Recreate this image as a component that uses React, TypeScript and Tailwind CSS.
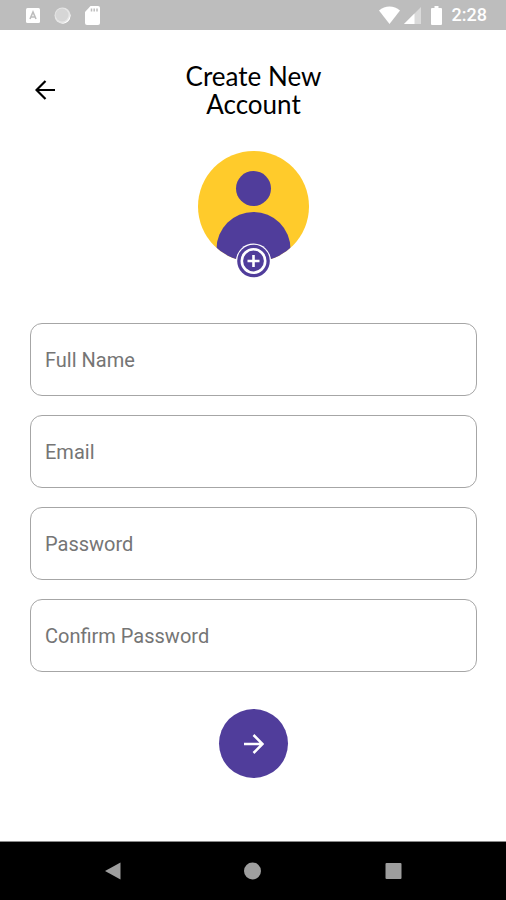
import { useState } from 'react';

interface Field {
  key: string;
  label: string;
  type: string;
}

const FIELDS: Field[] = [
  { key: 'fullName', label: 'Full Name', type: 'text' },
  { key: 'email', label: 'Email', type: 'email' },
  { key: 'password', label: 'Password', type: 'password' },
  { key: 'confirmPassword', label: 'Confirm Password', type: 'password' },
];

function StatusBar() {
  return (
    <div className="flex h-[30px] items-center justify-between bg-[#bdbdbd] pr-[19px] pl-[26px] text-white">
      <div className="flex items-center gap-3.5">
        <svg className="h-[15px] w-[14px]" viewBox="0 0 14 15">
          <rect width="14" height="15" rx="1.5" fill="#fff" />
          <path d="M4 11 7 4l3 7M5 9h4" fill="none" stroke="#bdbdbd" strokeWidth="1.6" />
        </svg>
        <svg className="h-[17px] w-[17px]" viewBox="0 0 17 17">
          <circle cx="8.5" cy="8.5" r="8" fill="#e6e6e6" />
          <path d="M16 6a8 8 0 0 1-10 10.2A9 9 0 0 0 16 6z" fill="#fff" />
          <circle cx="8" cy="8" r="6.5" fill="#d6d6d6" />
        </svg>
        <svg className="h-[19px] w-[15px]" viewBox="0 0 15 19">
          <path d="M5.5 0H13a2 2 0 0 1 2 2v15a2 2 0 0 1-2 2H2a2 2 0 0 1-2-2V6z" fill="#fff" />
          <path d="M6.5 2.5v3M9.2 2.5v3M12 2.5v3" stroke="#bdbdbd" strokeWidth="1.5" />
        </svg>
      </div>
      <div className="flex items-center">
        <svg className="h-[18px] w-[21px]" viewBox="0 0 21 18">
          <path d="M0 4.5C6-.8 15-.8 21 4.5L10.5 18z" fill="#fff" />
        </svg>
        <svg className="ml-1 h-[17px] w-[17px]" viewBox="0 0 17 17">
          <path d="M17 0v17H0z" fill="#dadada" />
          <path d="M10.5 6.5V17H0z" fill="#fff" />
        </svg>
        <svg className="ml-2.5 h-[19px] w-[11px]" viewBox="0 0 11 19">
          <path d="M3.5 0h4v2H10a1 1 0 0 1 1 1v15a1 1 0 0 1-1 1H1a1 1 0 0 1-1-1V3a1 1 0 0 1 1-1h2.5z" fill="#fff" />
        </svg>
        <span className="ml-2.5 text-lg leading-5 font-medium">2:28</span>
      </div>
    </div>
  );
}

function Avatar() {
  return (
    <svg className="h-[127px] w-[111px]" viewBox="0 0 111 127">
      <clipPath id="avatar-disc">
        <circle cx="55.5" cy="55.5" r="55.5" />
      </clipPath>
      <circle cx="55.5" cy="55.5" r="55.5" fill="#ffcb2b" />
      <g clipPath="url(#avatar-disc)" fill="#503d9b">
        <circle cx="55.5" cy="37.5" r="17.5" />
        <path d="M18.5 98a37 37 0 0 1 74 0v20h-74z" />
      </g>
      <circle cx="55.5" cy="110" r="17.5" fill="#fff" />
      <circle cx="55.5" cy="110" r="16.3" fill="#503d9b" />
      <circle cx="55.5" cy="110" r="11.7" fill="none" stroke="#fff" strokeWidth="2.6" />
      <path d="M55.5 104v12M49.5 110h12" stroke="#fff" strokeWidth="2.6" />
    </svg>
  );
}

function NavBar() {
  return (
    <nav className="flex h-[59px] items-center justify-around border-t border-[#8a8a8a] bg-black px-[42px]">
      <button aria-label="Back">
        <svg className="h-[18px] w-[17px]" viewBox="0 0 17 18"><path d="M1 9 16.500 0.500v17z" fill="#9e9e9e" /></svg>
      </button>
      <button aria-label="Home">
        <svg className="h-[18px] w-[17px]" viewBox="0 0 17 18"><circle cx="8.5" cy="9" r="8.5" fill="#9e9e9e" /></svg>
      </button>
      <button aria-label="Recent apps">
        <svg className="h-[18px] w-[17px]" viewBox="0 0 17 18"><rect x="0.5" y="1" width="16" height="16" rx="1" fill="#9e9e9e" /></svg>
      </button>
    </nav>
  );
}

export default function App() {
  const [values, setValues] = useState<Record<string, string>>({});

  return (
    <div className="flex min-h-screen flex-col bg-white font-['Roboto',sans-serif]">
      <StatusBar />

      <main className="flex-1 pt-8 pr-[29px] pb-8 pl-[30px]">
        <header className="grid grid-cols-[30px_1fr_30px] items-center">
          <button aria-label="Go back" className="flex h-[30px] items-center justify-center">
            <svg className="h-5 w-5" viewBox="0 0 20 20" fill="none" stroke="#000" strokeWidth="2.2">
              <path d="M20 10H2M10.5 1 1.5 10l9 9" />
            </svg>
          </button>
          <h1 className="mx-auto max-w-[160px] text-center font-['Lato',sans-serif] text-[26px] leading-7 text-black">
            Create New Account
          </h1>
        </header>

        <form onSubmit={e => e.preventDefault()}>
          <button type="button" aria-label="Add profile photo" className="mx-auto mt-[33px] block">
            <Avatar />
          </button>

          <div className="mt-[45px] flex flex-col gap-[19px]">
            {FIELDS.map(f => (
              <input
                key={f.key}
                type={f.type}
                aria-label={f.label}
                placeholder={f.label}
                value={values[f.key] ?? ''}
                onChange={e => setValues(v => ({ ...v, [f.key]: e.target.value }))}
                className="h-[73px] w-full rounded-xl border border-[#a6a6a6] px-3.5 text-xl text-gray-900 placeholder:text-[#757575]"
              />
            ))}
          </div>

          <button
            type="submit"
            aria-label="Continue"
            className="mx-auto mt-[37px] flex h-[69px] w-[69px] items-center justify-center rounded-full bg-[#503d9b]"
          >
            <svg className="h-5 w-5" viewBox="0 0 20 20" fill="none" stroke="#fff" strokeWidth="2.5">
              <path d="M0 10h18M9.5 1l9 9-9 9" />
            </svg>
          </button>
        </form>
      </main>

      <NavBar />
    </div>
  );
}
